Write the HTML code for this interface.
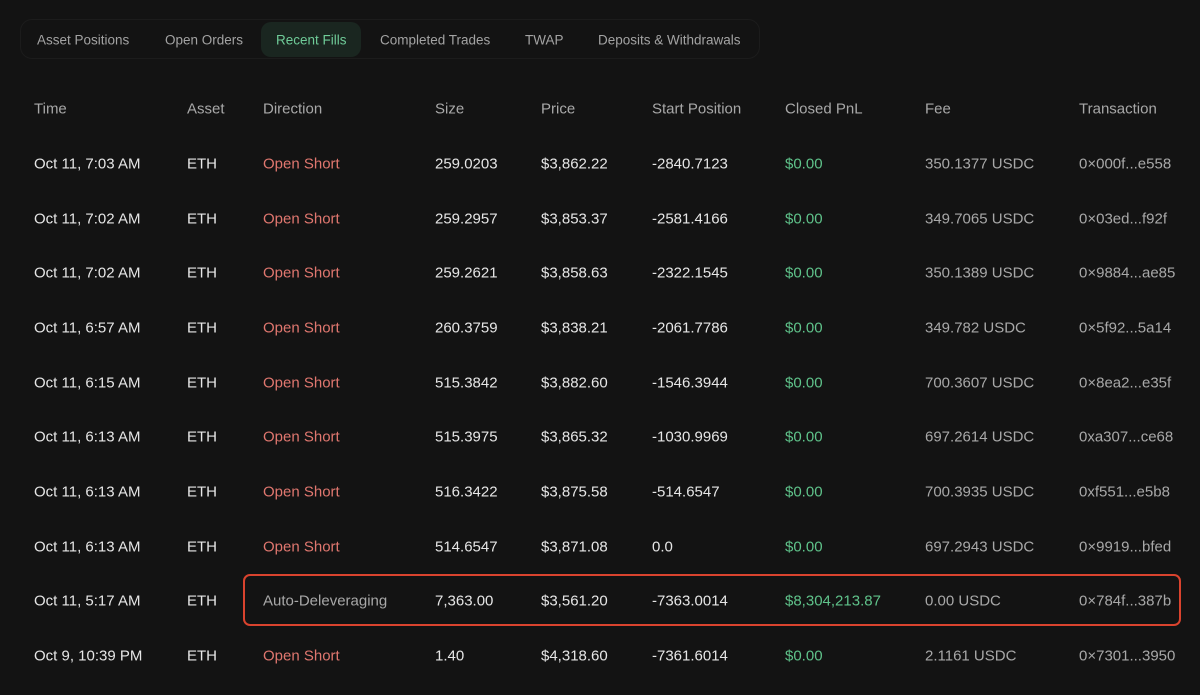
<!DOCTYPE html>
<html><head><style>
body{margin:0;width:1200px;height:695px;background:#131313;font-family:"Liberation Sans",sans-serif;overflow:hidden;position:relative}
.tabs{position:absolute;left:20px;top:19px;width:740px;height:40px;border:1px solid #1c1c1c;border-radius:12px;box-sizing:border-box}
.tab{position:absolute;top:40px;transform:translateY(-50%);color:#a3a3a3;font-size:13.5px}
.act{position:absolute;left:261px;top:22px;width:100px;height:35px;background:#1a2620;border-radius:10px}
.t{position:absolute;font-size:15px;color:#e6e6e6;transform:translateY(-50%);white-space:nowrap}
.h{color:#a8a8a8}
.r{color:#e0776f}.g{color:#5fc28a}.m{color:#a8a8a8}
.box{position:absolute;left:243px;top:574px;width:938px;height:52px;border:2.5px solid #d9432e;border-radius:7px;box-sizing:border-box}
</style></head><body>
<div class="tabs"></div><div class="act"></div>
<div class="tab" style="left:37px">Asset Positions</div>
<div class="tab" style="left:165px">Open Orders</div>
<div class="tab" style="left:276px;color:#6fcb98">Recent Fills</div>
<div class="tab" style="left:380px">Completed Trades</div>
<div class="tab" style="left:525px">TWAP</div>
<div class="tab" style="left:598px">Deposits &amp; Withdrawals</div>
<div class="box"></div>
<div id="c"></div>
<script>
const xs=[34,187,263,435,541,652,785,925,1079];
const rows=[
["Time","Asset","Direction","Size","Price","Start Position","Closed PnL","Fee","Transaction"],
["Oct 11, 7:03 AM","ETH","Open Short","259.0203","$3,862.22","-2840.7123","$0.00","350.1377 USDC","0×000f...e558"],
["Oct 11, 7:02 AM","ETH","Open Short","259.2957","$3,853.37","-2581.4166","$0.00","349.7065 USDC","0×03ed...f92f"],
["Oct 11, 7:02 AM","ETH","Open Short","259.2621","$3,858.63","-2322.1545","$0.00","350.1389 USDC","0×9884...ae85"],
["Oct 11, 6:57 AM","ETH","Open Short","260.3759","$3,838.21","-2061.7786","$0.00","349.782 USDC","0×5f92...5a14"],
["Oct 11, 6:15 AM","ETH","Open Short","515.3842","$3,882.60","-1546.3944","$0.00","700.3607 USDC","0×8ea2...e35f"],
["Oct 11, 6:13 AM","ETH","Open Short","515.3975","$3,865.32","-1030.9969","$0.00","697.2614 USDC","0xa307...ce68"],
["Oct 11, 6:13 AM","ETH","Open Short","516.3422","$3,875.58","-514.6547","$0.00","700.3935 USDC","0xf551...e5b8"],
["Oct 11, 6:13 AM","ETH","Open Short","514.6547","$3,871.08","0.0","$0.00","697.2943 USDC","0×9919...bfed"],
["Oct 11, 5:17 AM","ETH","Auto-Deleveraging","7,363.00","$3,561.20","-7363.0014","$8,304,213.87","0.00 USDC","0×784f...387b"],
["Oct 9, 10:39 PM","ETH","Open Short","1.40","$4,318.60","-7361.6014","$0.00","2.1161 USDC","0×7301...3950"]];
const ys=[109,164,219,273,328,383,437,492,547,601,656];
let h="";
rows.forEach((r,i)=>r.forEach((v,j)=>{
let c=i==0?"h":"";
if(i>0){if(j==2)c=v=="Open Short"?"r":"m";if(j==6)c="g";if(j==7||j==8)c="m";}
h+=`<div class="t ${c}" style="left:${xs[j]}px;top:${ys[i]}px">${v}</div>`;}));
document.getElementById("c").innerHTML=h;
</script>
</body></html>
